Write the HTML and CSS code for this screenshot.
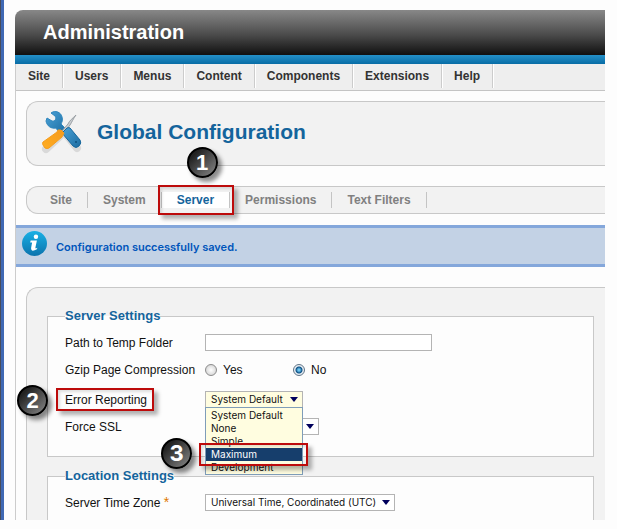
FILE: index.html
```html
<!DOCTYPE html>
<html lang="en">
<head>
<meta charset="utf-8">
<title>Global Configuration</title>
<link rel="stylesheet" href="styles.css">
</head>
<body>
<div class="window">
  <div class="page">
    <header class="header">Administration</header>
    <div class="frame">
      <nav class="menu">
        <a href="#">Site</a><a href="#">Users</a><a href="#">Menus</a><a href="#">Content</a><a href="#">Components</a><a href="#">Extensions</a><a href="#">Help</a>
      </nav>
      <div class="panel title-panel">
        <svg class="tools" viewBox="0 0 44 44" aria-hidden="true">
          <defs>
            <linearGradient id="steel" x1="0" y1="0" x2="1" y2="1"><stop offset="0" stop-color="#4ba3d8"/><stop offset="1" stop-color="#1b6ba0"/></linearGradient>
            <linearGradient id="amber" x1="1" y1="0" x2="0" y2="1"><stop offset="0" stop-color="#f59a1c"/><stop offset="1" stop-color="#ffad22"/></linearGradient>
          </defs>
          <path d="M7 39 L22 25 M27 24 L38 38" stroke="#000" stroke-opacity=".1" stroke-width="8" stroke-linecap="round"/>
          <path d="M12 3 C16 0 22 2 23 7 C24 10 23 12 22 14 L27 19 L21 24 L17 18 C12 19 8 16 7 11 L8 8 L13 11 C16 12 18 8 16 6 Z" fill="url(#steel)" stroke="#2f86bd" stroke-width="1"/>
          <path d="M23 21 L29 14 C30 11 34 8 37 5 C34 9 33 12 31 15 L25 23 Z" fill="#c9cdd0" stroke="#9aa0a5" stroke-width="1"/>
          <path d="M23 23 L28 18 Q30 17 31 18 L41 30 Q43 33 40 36 Q37 39 34 36 Z" fill="url(#steel)" stroke="#17679c" stroke-width="1"/>
          <circle cx="37" cy="32" r="1" fill="#0c4f7d"/>
          <path d="M19 20 L22 20 L25 23 L23 27 L10 38 Q8 39 6 38 L4 35 Q3 33 4 32 L18 22 Z" fill="url(#amber)" stroke="#f59d1e" stroke-width="1"/>
        </svg>
        <h1>Global Configuration</h1>
      </div>
      <nav class="panel tabs">
        <a href="#">Site</a><a href="#">System</a><a href="#" class="active">Server<span class="badge badge-top">1</span></a><a href="#">Permissions</a><a href="#">Text Filters</a>
      </nav>
      <div class="message" role="status">
        <svg class="info" viewBox="0 0 26 26" aria-hidden="true">
          <defs><linearGradient id="sky" x1="0" y1="0" x2="0" y2="1"><stop offset="0" stop-color="#19b0e5"/><stop offset="1" stop-color="#0b73ad"/></linearGradient></defs>
          <circle cx="13" cy="13" r="13" fill="url(#sky)"/>
          <circle cx="14.500" cy="6" r="2.300" fill="#fff"/>
          <path d="M9 10 H15.500 L14 17 Q13.500 19 16 17.500 L15.500 19 Q9 22.500 9.500 17.500 L10.500 12 H8.500 Z" fill="#fff"/>
        </svg>
        <strong>Configuration successfully saved.</strong>
      </div>
      <form class="panel settings">
        <fieldset>
          <legend>Server Settings</legend>
          <div class="row">
            <label for="temp">Path to Temp Folder</label>
            <input type="text" id="temp">
          </div>
          <div class="row row-radios">
            <span id="gzip">Gzip Page Compression</span>
            <div class="radios" role="radiogroup" aria-labelledby="gzip">
              <label><input type="radio" name="gzip">Yes</label>
              <label><input type="radio" name="gzip" checked>No</label>
            </div>
          </div>
          <div class="row">
            <label for="errors" class="marked">Error Reporting<span class="badge badge-left">2</span></label>
            <div class="select open">
              <select id="errors"><option>System Default</option></select>
              <ul class="options" role="listbox" aria-label="Error Reporting">
                <li role="option">System Default</li>
                <li role="option">None</li>
                <li role="option">Simple</li>
                <li role="option" class="chosen" aria-selected="true">Maximum<span class="badge badge-option">3</span></li>
                <li role="option">Development</li>
              </ul>
            </div>
          </div>
          <div class="row">
            <label for="ssl">Force SSL</label>
            <div class="select select-ssl"><select id="ssl"><option>None</option></select></div>
          </div>
        </fieldset>
        <fieldset class="last">
          <legend>Location Settings</legend>
          <div class="row">
            <label for="zone">Server Time Zone <span class="star">*</span></label>
            <div class="select"><select id="zone"><option>Universal Time, Coordinated (UTC)</option></select></div>
          </div>
        </fieldset>
      </form>
    </div>
  </div>
</div>
</body>
</html>
```
FILE: styles.css
```css
* { box-sizing: border-box; }

body {
  margin: 0;
  background: #fdfdfd;
  color: #111;
  font: 12px/16px "Liberation Sans", Arial, sans-serif;
}

a { color: inherit; text-decoration: none; }

.window {
  border-left: 1px solid #484c5a;
  padding: 10px 12px 0 11px;
  box-shadow: inset 3px 0 #3f68b3;
}

.page { margin-left: 3px; }

.header {
  height: 54px;
  padding: 10px 28px;
  border-radius: 8px 0 0 0;
  background:
    linear-gradient(#2490c8, #086ca5) bottom / 100% 9px no-repeat,
    linear-gradient(#888, #4b4b4b 55%, #101010) top / 100% 45px no-repeat;
  color: #fff;
  font-size: 20px;
  font-weight: bold;
  line-height: 24px;
}

.frame { border-left: 1px solid #ccc; }

.menu {
  display: flex;
  height: 27px;
  border-bottom: 1px solid #c4c4c4;
  background: #eee;
  color: #333;
  font-weight: bold;
}

.menu a {
  height: 24px;
  padding: 4px 12px;
  border-right: 1px solid #ccc;
  box-shadow: 1px 0 #fff;
}

.panel {
  margin-left: 10px;
  border: 1px solid #c8c8c8;
  border-right: 0;
  background: #f2f2f2;
}

.title-panel {
  display: flex;
  align-items: center;
  gap: 14px;
  height: 65px;
  margin-top: 10px;
  padding: 0 0 4px 12px;
  border-radius: 12px 0 0 12px;
}

.tools { width: 44px; height: 44px; }

h1 {
  margin: 0;
  color: #14649c;
  font-size: 21px;
  line-height: 24px;
}

.tabs {
  display: flex;
  align-items: center;
  height: 28px;
  margin-top: 20px;
  padding-left: 8px;
  border-radius: 12px 0 0 12px;
  color: #808080;
  font-weight: bold;
}

.tabs a { padding: 0 15px; border-right: 1px solid #c4c4c4; }

.tabs .active {
  position: relative;
  background: #fff;
  color: #14649c;
}

.active::before,
.marked::before,
.chosen::before {
  content: "";
  position: absolute;
  border: 2px solid #bd0b0b;
  box-shadow: 4px 4px 4px rgba(0, 0, 0, .3), inset 2px 2px 3px rgba(0, 0, 0, .12);
}

.active::before { inset: -7px -5px -7px -4px; }

.badge {
  position: absolute;
  width: 31px;
  height: 31px;
  border: 2px solid #000;
  border-radius: 50%;
  background: linear-gradient(135deg, #222 20%, #888);
  box-shadow: 4px 4px 4px rgba(0, 0, 0, .45);
  color: #fff;
  font-size: 22px;
  font-weight: bold;
  line-height: 27px;
  text-align: center;
}

.badge-top { left: 25px; top: -45px; }

.message {
  display: flex;
  gap: 9px;
  height: 42px;
  margin-top: 11px;
  padding: 3px 6px;
  border: solid #84a7db;
  border-width: 3px 0;
  background: #c3d2e5;
  color: #0055bb;
  font: 11px/32px Inter, "Liberation Sans", sans-serif;
}

.message strong { font-weight: 600; }

.info { width: 25px; height: 25px; }

.settings {
  margin-top: 20px;
  padding: 20px 11px 0 20px;
  border-bottom: 0;
  border-radius: 12px 0 0 0;
}

fieldset {
  min-width: 0;
  margin: 0 0 11px;
  padding: 10px 17px 21px;
  border: 1px solid #c8c8c8;
  background: #fdfdfd;
}

.last { margin: 0; padding-bottom: 9px; border-bottom: 0; }

legend {
  padding: 0;
  color: #14649c;
  font-size: 13px;
  font-weight: bold;
}

.row {
  display: grid;
  grid-template-columns: 140px 1fr;
  align-items: center;
  height: 17px;
}

.row + .row { margin-top: 10px; }
.row + .row-radios { margin-bottom: 13px; }
.row > :first-child { white-space: nowrap; }

input[type="text"] {
  width: 227px;
  height: 17px;
  margin: 0;
  padding: 0 4px;
  border: 1px solid #b4b4b4;
  background: #fff;
}

.radios { display: grid; grid-template-columns: 88px 88px; }
.radios label { display: flex; align-items: center; gap: 6px; }

input[type="radio"] {
  appearance: none;
  width: 12px;
  height: 12px;
  margin: 0;
  border: 1px solid #8c8c8c;
  border-radius: 50%;
  background: radial-gradient(#fff, #ccc);
}

input[type="radio"]:checked {
  border-color: #5f7386;
  background: radial-gradient(circle, #6cc5ef 0 1px, #0b4f84 3px, #e8eef3 4px);
}

.marked { position: relative; justify-self: start; }
.marked::before { inset: -4px -7px -3px -9px; }
.badge-left { left: -48px; top: -7px; }

.select {
  position: relative;
  justify-self: start;
  height: 17px;
  font: 10px/13px Inter, "Liberation Sans", sans-serif;
}

.select::after {
  content: "";
  position: absolute;
  top: 6px;
  right: 5px;
  border: solid transparent;
  border-top-color: #00005c;
  border-width: 5px 4px 0;
}

select {
  appearance: none;
  display: block;
  width: 100%;
  height: 17px;
  margin: 0;
  padding: 0 17px 0 5px;
  border: 1px solid #b4b4b4;
  border-radius: 0;
  background: #fff;
  color: #111;
  font: inherit;
}

.open { width: 98px; }
.open select { background: #fffde0; }
.select-ssl { width: 114px; }

.options {
  position: absolute;
  z-index: 1;
  top: 16px;
  left: 0;
  width: 98px;
  margin: 0;
  padding: 1px 0 0;
  border: 1px solid #7f9db9;
  background: #fffde0;
  list-style: none;
}

.options li { padding-left: 5px; }

.options .chosen {
  position: relative;
  background: #163e6c;
  color: #fff;
}

.chosen::before { inset: -5px -6px -5px -7px; }
.badge-option { left: -45px; top: -10px; }

.star { color: #e07800; font-size: 14px; line-height: 12px; }
```
